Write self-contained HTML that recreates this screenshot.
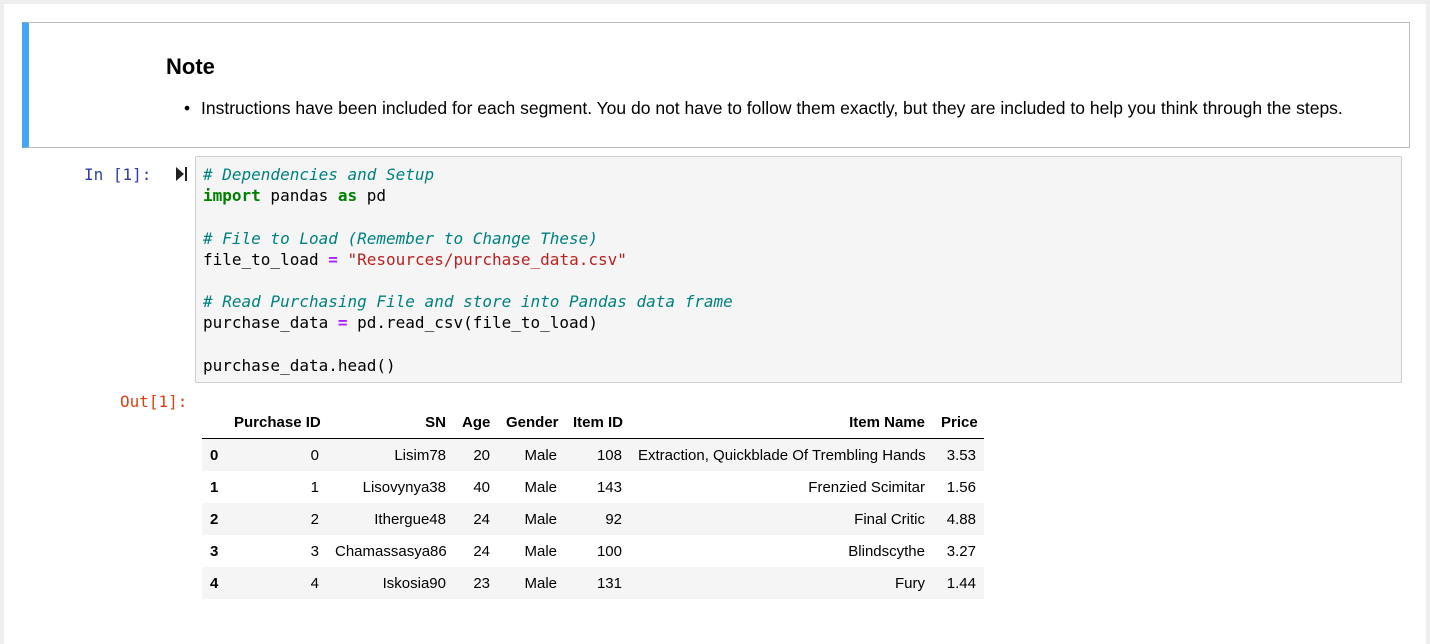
<!DOCTYPE html>
<html><head><meta charset="utf-8"><style>
body{margin:0;width:1430px;height:627px;background:#eee;overflow:hidden;font-family:"Liberation Sans",sans-serif}
.page{position:absolute;left:4px;top:4px;width:1422px;height:640px;background:#fff}
.note{position:absolute;left:22px;top:22px;border:1px solid #bbb;border-left:7px solid #42a5f5;box-sizing:border-box;width:1388px;height:126px}
.note h3{position:absolute;left:137px;top:31px;margin:0;font-size:22px;font-weight:bold;color:#000}
.note .li{position:absolute;left:172px;top:75px;font-size:17.5px;color:#000;white-space:nowrap}
.note .li:before{content:"•";position:absolute;left:-17px}
.prompt{position:absolute;font-family:"DejaVu Sans Mono","Liberation Mono",monospace;font-size:16px}
.code{position:absolute;left:195px;top:156px;width:1207px;height:227px;box-sizing:border-box;border:1px solid #cfcfcf;background:#f5f5f5;border-radius:2px}
.code pre{margin:0;position:absolute;left:7px;top:7px;font-family:"DejaVu Sans Mono",monospace;font-size:16px;line-height:21.2px;color:#000}
.c{color:#008080;font-style:italic}.k{color:#008000;font-weight:bold}.o{color:#aa22ff;font-weight:bold}.s{color:#ba2121}
table{position:absolute;left:202px;top:406px;width:782px;border-collapse:collapse;table-layout:fixed;font-size:15px;color:#000}
th,td{padding:0 8px;text-align:right;height:32px;white-space:nowrap;overflow:visible}
thead th{height:32px;border-bottom:1px solid #000}
tbody tr:nth-child(odd){background:#f5f5f5}
tbody th{text-align:left}
</style></head><body><div class="page"></div>
<div class="note"><h3>Note</h3><div class="li">Instructions have been included for each segment. You do not have to follow them exactly, but they are included to help you think through the steps.</div></div>
<div class="prompt" style="left:84px;top:165px;color:#303f9f">In [1]:</div>
<svg style="position:absolute;left:176px;top:167px" width="12" height="14"><path d="M0 0L8 7L0 14Z" fill="#222"/><rect x="9" y="0" width="2" height="14" fill="#222"/></svg>
<div class="code"><pre><span class="c"># Dependencies and Setup</span>
<span class="k">import</span> pandas <span class="k">as</span> pd

<span class="c"># File to Load (Remember to Change These)</span>
file_to_load <span class="o">=</span> <span class="s">"Resources/purchase_data.csv"</span>

<span class="c"># Read Purchasing File and store into Pandas data frame</span>
purchase_data <span class="o">=</span> pd.read_csv(file_to_load)

purchase_data.head()</pre></div>
<div class="prompt" style="left:120px;top:392px;color:#d84315">Out[1]:</div>
<table>
<colgroup><col style="width:24px"><col style="width:101px"><col style="width:127px"><col style="width:44px"><col style="width:67px"><col style="width:65px"><col style="width:303px"><col style="width:51px"></colgroup>
<thead><tr><th></th><th>Purchase ID</th><th>SN</th><th>Age</th><th>Gender</th><th>Item ID</th><th>Item Name</th><th>Price</th></tr></thead>
<tbody>
<tr><th>0</th><td>0</td><td>Lisim78</td><td>20</td><td>Male</td><td>108</td><td>Extraction, Quickblade Of Trembling Hands</td><td>3.53</td></tr>
<tr><th>1</th><td>1</td><td>Lisovynya38</td><td>40</td><td>Male</td><td>143</td><td>Frenzied Scimitar</td><td>1.56</td></tr>
<tr><th>2</th><td>2</td><td>Ithergue48</td><td>24</td><td>Male</td><td>92</td><td>Final Critic</td><td>4.88</td></tr>
<tr><th>3</th><td>3</td><td>Chamassasya86</td><td>24</td><td>Male</td><td>100</td><td>Blindscythe</td><td>3.27</td></tr>
<tr><th>4</th><td>4</td><td>Iskosia90</td><td>23</td><td>Male</td><td>131</td><td>Fury</td><td>1.44</td></tr>
</tbody></table>
</body></html>
